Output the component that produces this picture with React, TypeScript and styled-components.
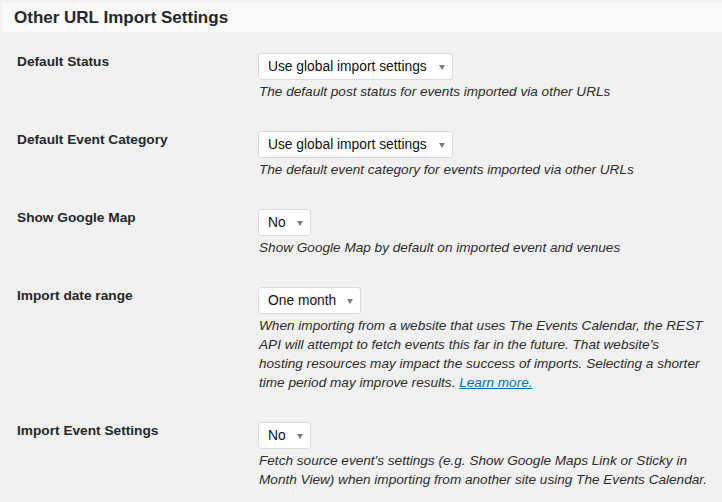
import React from "react";
import styled, { createGlobalStyle } from "styled-components";

const Global = createGlobalStyle`
  html, body { margin: 0; padding: 0; background: #f1f1f1; }
  body {
    font-family: "Liberation Sans", Arial, Helvetica, sans-serif;
    color: #23282d;
    font-size: 13.7px;
  }
`;

const Page = styled.div`
  width: 722px;
  height: 502px;
  overflow: hidden;
  background: #f1f1f1;
  padding: 3px 0 0 2px;
  box-sizing: border-box;
`;

const Header = styled.div`
  height: 29px;
  background: #f9f9f9;
  display: flex;
  align-items: center;
  padding-left: 12px;
`;

const Title = styled.h2`
  margin: 0;
  font-size: 17px;
  font-weight: 700;
  color: #23282d;
  line-height: 1;
`;

const Table = styled.div`
  display: grid;
  grid-template-columns: 256px 460px;
  margin-top: 6px;
`;

const Label = styled.div`
  padding: 15px 0 0 15px;
  font-weight: 700;
  font-size: 13.7px;
  line-height: 18px;
  color: #23282d;
`;

const Field = styled.div`
  padding: 15px 0;
  display: flex;
  flex-direction: column;
  align-items: flex-start;
`;

const Select = styled.div<{ $w: number }>`
  width: ${(p) => p.$w}px;
  height: 27px;
  box-sizing: border-box;
  background: #fff;
  border: 1px solid #dadada;
  border-radius: 3px;
  display: flex;
  align-items: center;
  justify-content: space-between;
  padding: 0 7px 0 9px;
  font-size: 13.8px;
  color: #111;
`;

const Arrow = styled.span`
  width: 0;
  height: 0;
  border-left: 3px solid transparent;
  border-right: 3px solid transparent;
  border-top: 5px solid #7a7a7a;
  margin-top: 1px;
`;

const Desc = styled.p`
  margin: 2px 0 0 1px;
  font-style: italic;
  font-size: 13.6px;
  line-height: 19px;
  color: #2c2c2c;
`;

const Link = styled.a`
  color: #0073aa;
  text-decoration: underline;
`;

type Row = {
  label: string;
  value: string;
  width: number;
  desc: React.ReactNode;
};

const rows: Row[] = [
  {
    label: "Default Status",
    value: "Use global import settings",
    width: 195,
    desc: "The default post status for events imported via other URLs",
  },
  {
    label: "Default Event Category",
    value: "Use global import settings",
    width: 195,
    desc: "The default event category for events imported via other URLs",
  },
  {
    label: "Show Google Map",
    value: "No",
    width: 53,
    desc: "Show Google Map by default on imported event and venues",
  },
  {
    label: "Import date range",
    value: "One month",
    width: 103,
    desc: (
      <>
        When importing from a website that uses The Events Calendar, the REST
        <br />
        API will attempt to fetch events this far in the future. That website's
        <br />
        hosting resources may impact the success of imports. Selecting a shorter
        <br />
        time period may improve results. <Link href="#">Learn more.</Link>
      </>
    ),
  },
  {
    label: "Import Event Settings",
    value: "No",
    width: 53,
    desc: (
      <>
        Fetch source event's settings (e.g. Show Google Maps Link or Sticky in
        <br />
        Month View) when importing from another site using The Events Calendar.
      </>
    ),
  },
];

export default function App() {
  return (
    <Page>
      <Global />
      <Header>
        <Title>Other URL Import Settings</Title>
      </Header>
      <Table>
        {rows.map((r) => (
          <React.Fragment key={r.label}>
            <Label>{r.label}</Label>
            <Field>
              <Select $w={r.width}>
                <span>{r.value}</span>
                <Arrow />
              </Select>
              <Desc>{r.desc}</Desc>
            </Field>
          </React.Fragment>
        ))}
      </Table>
    </Page>
  );
}
